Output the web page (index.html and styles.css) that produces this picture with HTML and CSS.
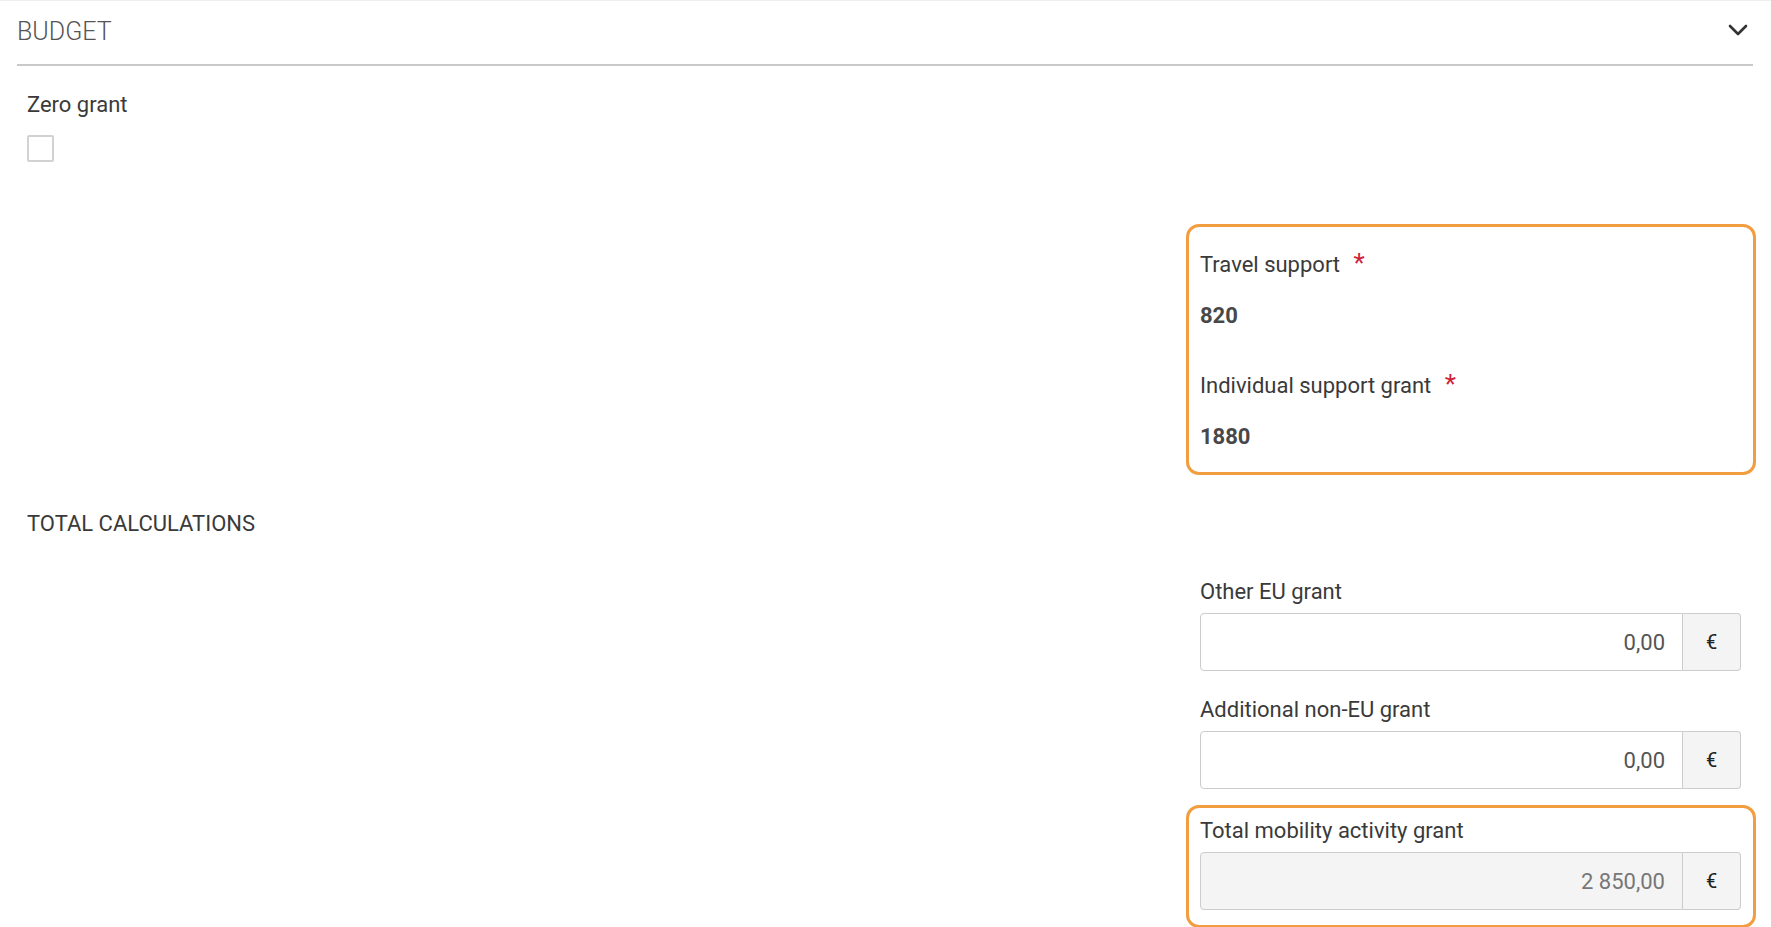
FILE: index.html
```html
<!DOCTYPE html>
<html lang="en">
<head>
    <meta charset="UTF-8">
    <meta name="viewport" content="width=device-width, initial-scale=1.0">
    <title>Budget</title>
    <link rel="stylesheet" href="styles.css">
</head>
<body>
<div class="panel">
    <div class="panel-head">
        <span class="panel-title">BUDGET</span>
        <svg class="chevron" width="20" height="12" viewBox="0 0 20 12">
            <path d="M2 2 L10 10 L18 2" fill="none" stroke="#333" stroke-width="2.6" stroke-linecap="round" stroke-linejoin="round"/>
        </svg>
    </div>
    <div class="panel-body">
        <div class="zero">
            <div class="label">Zero grant</div>
            <span class="checkbox"></span>
        </div>

        <div class="row support-row">
            <div></div>
            <div class="highlight support">
                <div class="ro-field">
                    <div class="label">Travel support <span class="req">*</span></div>
                    <div class="value">820</div>
                </div>
                <div class="ro-field">
                    <div class="label">Individual support grant <span class="req">*</span></div>
                    <div class="value">1880</div>
                </div>
            </div>
        </div>

        <h3 class="subhead">TOTAL CALCULATIONS</h3>

        <div class="row calc-row">
            <div></div>
            <div class="col-right">
                <div class="field plain">
                    <div class="label">Other EU grant</div>
                    <div class="input-group">
                        <input class="input" type="text" value="0,00">
                        <span class="addon">€</span>
                    </div>
                </div>
                <div class="field plain">
                    <div class="label">Additional non-EU grant</div>
                    <div class="input-group">
                        <input class="input" type="text" value="0,00">
                        <span class="addon">€</span>
                    </div>
                </div>
                <div class="highlight total">
                    <div class="field">
                        <div class="label">Total mobility activity grant</div>
                        <div class="input-group">
                            <input class="input" type="text" value="2 850,00" disabled>
                            <span class="addon">€</span>
                        </div>
                    </div>
                </div>
            </div>
        </div>
    </div>
</div>
</body>
</html>
```

FILE: styles.css
```css
body {
    margin: 0;
    font-family: Roboto, "Liberation Sans", sans-serif;
    color: #3a3a3a;
    background: #fff;
}

.panel {
    padding: 0 15px 0 17px;
    border-top: 1px solid #eee;
}

.panel-head {
    display: flex;
    align-items: center;
    justify-content: space-between;
    height: 63px;
    margin-right: 3px;
    border-bottom: 2px solid #c9c9c9;
}

.panel-title {
    margin-top: -2px;
    font-size: 25px;
    font-weight: 300;
    line-height: 30px;
    color: #555;
}

.chevron {
    margin-right: 5px;
    margin-top: -6px;
}

.panel-body {
    padding-left: 10px;
}

.label {
    font-size: 22px;
    line-height: 30px;
    color: #3a3a3a;
}

.req {
    color: #d0213b;
    font-size: 26px;
    margin-left: 8px;
    vertical-align: top;
    line-height: 26px;
}

.zero {
    padding-top: 24px;
}

.checkbox {
    display: block;
    width: 23px;
    height: 23px;
    margin-top: 15px;
    border: 2px solid #d2d2d2;
    border-radius: 2px;
}

.row {
    display: grid;
    grid-template-columns: 1fr 570px;
}

.support-row {
    margin-top: 62px;
}

.highlight {
    border: 3px solid #f29d3f;
    border-radius: 13px;
}

.support {
    padding: 23px 12px 20px 11px;
}

.value {
    margin-top: 21px;
    font-size: 22px;
    font-weight: 700;
    line-height: 30px;
    color: #484848;
}

.ro-field + .ro-field {
    margin-top: 40px;
}

.subhead {
    margin: 34px 0 0;
    font-size: 22px;
    font-weight: 400;
    line-height: 30px;
    color: #3a3a3a;
}

.calc-row {
    margin-top: 38px;
}

.field.plain {
    padding: 0 15px 0 14px;
}

.field.plain + .field.plain {
    margin-top: 24px;
}

.input-group {
    display: flex;
    height: 58px;
    margin-top: 6px;
}

.input {
    flex: 1;
    min-width: 0;
    box-sizing: border-box;
    height: 58px;
    padding: 0 17px 0 10px;
    border: 1px solid #ccc;
    border-radius: 4px 0 0 4px;
    font-family: Roboto, "Liberation Sans", sans-serif;
    font-size: 22px;
    color: #555;
    text-align: right;
    background: #fff;
    outline: none;
}

.input:disabled {
    background: #f4f4f4;
    color: #777;
}

.addon {
    display: flex;
    align-items: center;
    justify-content: center;
    box-sizing: border-box;
    width: 58px;
    border: 1px solid #ccc;
    border-left: 0;
    border-radius: 0 4px 4px 0;
    background: #f4f4f4;
    font-size: 20px;
    color: #222;
}

.total {
    margin-top: 16px;
    padding: 8px 12px 15px 11px;
}
```
